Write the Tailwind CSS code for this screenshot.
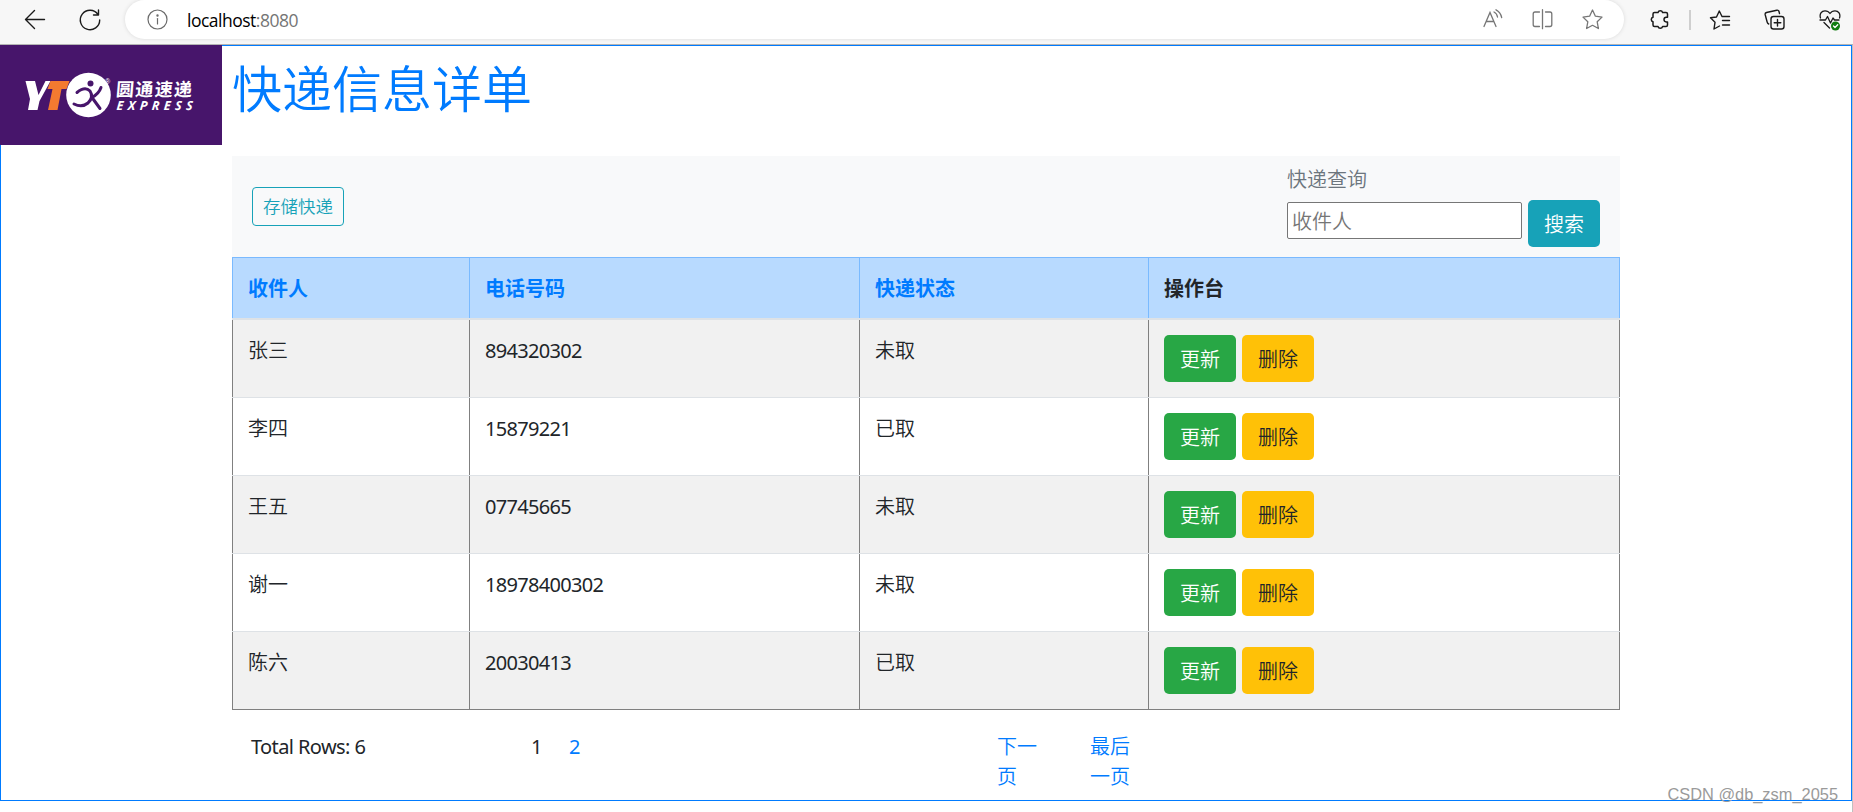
<!DOCTYPE html>
<html lang="zh-CN">
<head>
<meta charset="utf-8">
<title>快递信息详单</title>
<script src="https://cdn.jsdelivr.net/npm/@tailwindcss/browser@4"></script>
</head>
<body class="w-[1853px] h-[812px] overflow-hidden bg-white font-['Noto_Sans','Noto_Sans_CJK_SC',sans-serif] text-[20px] leading-[30px] text-[#212529]">
<div class="relative flex h-full flex-col">
  <!-- browser toolbar -->
  <header class="flex h-[45px] shrink-0 items-start border-b border-[#b4b4b4] bg-[#f7f7f7]">
    <div class="flex h-[39px] w-[125px] shrink-0 items-center gap-[31px] pl-[24px]">
      <svg class="size-[23px]" viewBox="0 0 23 23" fill="none" stroke="#1b1b1b" stroke-width="1.4" stroke-linecap="round" stroke-linejoin="round"><path d="M20.5 11.5H1.5M10.5 2.5l-9 9 9 9"/></svg>
      <svg class="size-[24px]" viewBox="0 0 24 24" fill="none" stroke="#1b1b1b" stroke-width="1.4" stroke-linecap="round" stroke-linejoin="round"><path d="M20 6.500A9.700 9.700 0 1 0 21.700 12M20.500 2v5h-5"/></svg>
    </div>
    <div class="flex h-[39px] w-[1499px] shrink-0 items-center rounded-full bg-white pl-[22px] shadow-[0_0_4px_rgba(0,0,0,0.12)]">
      <svg class="size-[21px] shrink-0" viewBox="0 0 21 21" fill="none" stroke="#6b6b6b" stroke-width="1.200" stroke-linecap="round"><circle cx="10.500" cy="10.500" r="9.500"/><path d="M10.500 9.500v5.500"/><circle cx="10.500" cy="6.500" r=".6" fill="#6b6b6b"/></svg>
      <div class="ml-[19px] flex-1 font-['Open_Sans'] text-[17.5px] tracking-[-0.500px] text-black">localhost<span class="text-[#757575]">:8080</span></div>
      <div class="mr-[21px] flex items-center gap-[29px]">
        <svg class="size-[21px]" viewBox="0 0 21 21" fill="none" stroke="#767676" stroke-width="1.300" stroke-linecap="round"><path d="M2 17.500 8 3.500l6 14M4.200 12.500h7.600M12 3q3 1.500 3.500 5M14 .8q4.500 2.200 5.700 7.700"/></svg>
        <svg class="size-[21px]" viewBox="0 0 21 21" fill="none" stroke="#767676" stroke-width="1.300" stroke-linecap="round"><path d="M10.500.7v19M7.500 3H3Q1.200 3 1.200 5v10.500q0 2 1.800 2h4.500M13.500 3H18q1.800 0 1.800 2v10.500q0 2-1.800 2h-4.500"/></svg>
        <svg class="size-[21px]" viewBox="0 0 21 21" fill="none" stroke="#767676" stroke-width="1.300" stroke-linejoin="round"><path d="m10.500 1 2.900 6.200 6.600.9-4.800 4.700 1.200 6.700-5.900-3.200-5.900 3.200 1.200-6.700L1 8.100l6.600-.9z"/></svg>
      </div>
    </div>
    <div class="flex h-[39px] items-center pl-[25px]">
      <svg class="size-[21px]" viewBox="0 0 21 21" fill="none" stroke="#1b1b1b" stroke-width="1.500" stroke-linejoin="round"><path d="M5.500 3.500H9a2.400 2.400 0 0 1 4.600 0H17q1.500 0 1.500 1.500v3.300h-1.200a2.300 2.300 0 0 0 0 4.600h1.200V16q0 1.500-1.500 1.500h-3.400a2.400 2.400 0 0 1-4.600 0H5.500Q4 17.500 4 16v-3.200a2.400 2.400 0 0 1 0-4.600V5q0-1.500 1.500-1.500z"/></svg>
      <div class="ml-[19px] h-[20px] w-[2px] bg-[#cfcfcf]"></div>
      <svg class="ml-[18px] h-[20px] w-[22px]" viewBox="0 0 22 20" fill="none" stroke="#1b1b1b" stroke-width="1.400" stroke-linecap="round" stroke-linejoin="round"><path d="M13 6.500 10.300 1 7.500 7l-6 .800 4.500 4.500L5 19l5.500-3M13 6.500h7.500M13.500 10.500h7M13.500 15h7"/></svg>
      <svg class="ml-[33px] size-[21px]" viewBox="0 0 21 21" fill="none" stroke="#1b1b1b" stroke-width="1.400" stroke-linecap="round" stroke-linejoin="round"><rect x="7" y="7.500" width="13" height="12.500" rx="2.500"/><path d="M13.500 10.500v6.500M10.200 13.700h6.600M15.500 4.500 15 2.500q-.5-1.700-2.200-1.300L2.500 3.500Q.8 4 1.200 5.700l2 7.500q.3 1.300 1.500 1.800"/></svg>
      <svg class="ml-[34px] size-[22px]" viewBox="0 0 22 22" fill="none" stroke="#1b1b1b" stroke-width="1.300" stroke-linecap="round" stroke-linejoin="round"><path d="M1.500 9C.2 5 2.500 1.800 6 1.800c2.300 0 4 1.200 5 2.700 1-1.500 2.700-2.700 5-2.700 3.500 0 5.800 3.200 4.500 7.200M1 11h5.500l2-3.500 3 6.500 2.500-5 1.500 2H20M5 13.500l5.500 5.500"/><circle cx="16.500" cy="17" r="4.500" fill="#107c10" stroke="none"/><path d="m14.500 17 1.500 1.500 2.700-2.700" stroke="#fff"/></svg>
    </div>
  </header>

  <!-- page viewport -->
  <div class="flex h-[767px] shrink-0 border-r border-[#c0c0c0]">
   <main class="h-[756px] w-[1852px] shrink-0 border border-[#007bff]">
    <div class="-ml-px -mt-px flex h-[755px]">
      <div class="h-[100px] w-[222px] shrink-0 bg-[#47156b]">
        <svg class="h-[100px] w-[222px]" viewBox="0 0 222 100">
          <path fill="#fff" d="M25.500 36h9.500l3.500 14 7-14h5L39.500 56l-2 9H28l2-11z"/>
          <path fill="#f37a30" d="M50.500 36h19l-3 8h-5l-4 21h-9.500l4.500-21h-5z"/>
          <circle cx="88.500" cy="50" r="22.300" fill="#fff"/>
          <circle cx="90.500" cy="38.500" r="3" fill="#47156b"/>
          <path fill="none" stroke="#47156b" stroke-width="3" stroke-linecap="round" stroke-linejoin="round" d="M77 47.500q8-6.500 13-1.500 4 6-2 12-6 5-14 1M101 42.500q-2 6-9 10l8 11"/>
          <text x="105" y="39" fill="#fff" font-family="Liberation Sans" font-size="7">®</text>
          <g transform="translate(116 0) skewX(-5)">
            <text x="4" y="51" fill="#fff" font-family="Noto Sans CJK SC" font-weight="700" font-size="18" textLength="76">圆通速递</text>
            <text x="6" y="65" fill="#fff" font-family="Open Sans" font-weight="700" font-style="italic" font-size="12.500" textLength="76">EXPRESS</text>
          </g>
        </svg>
      </div>
      <section class="ml-[10px] w-[1388px]">
        <h1 class="flex h-[111px] items-start pt-[14px] text-[50px] leading-[60px] font-[350] text-[#007bff]">快递信息详单</h1>
        <div class="flex h-[101px] items-center justify-between bg-[#f8f9fa] px-[20px]">
          <button class="flex h-[39px] w-[92px] items-center justify-center rounded-[4px] border border-[#17a2b8] pb-px text-[17.500px] font-[350] text-[#17a2b8]">存储快递</button>
          <form class="flex h-full flex-col pt-[9px]">
            <label class="font-[350] text-[#6c757d]">快递查询</label>
            <div class="flex items-start gap-[6px] pt-[5px]">
              <input class="mt-[2px] h-[37px] w-[235px] rounded-[2px] border border-[#767676] bg-white px-[4px] pt-[2px] font-[350] placeholder:text-[#757575]" placeholder="收件人">
              <button type="button" class="h-[47px] w-[72px] rounded-[5px] bg-[#17a2b8] pt-[3px] font-[350] text-white">搜索</button>
            </div>
          </form>
        </div>
        <div>
          <div class="grid h-[63px] grid-cols-[237px_390px_289px_472px] border-t border-b-2 border-t-[#7abaff] border-b-[#dee2e6] bg-[#b8daff] font-bold text-[#007bff] *:border-l *:border-[#7abaff] *:pt-[16px] *:pl-[15px]">
            <div>收件人</div><div>电话号码</div><div>快递状态</div><div class="border-r text-[#212529]">操作台</div>
          </div>
          <div id="rows"></div>
        </div>
        <nav class="flex pt-[22px] font-[350]">
          <div class="w-[299px] pl-[19px] font-normal tracking-[-0.600px]">Total Rows: 6</div>
          <div class="w-[38px] font-normal">1</div>
          <a class="w-[428px] font-normal text-[#007bff]">2</a>
          <a class="w-[93px] pr-[50px] text-[#007bff]">下一页</a>
          <a class="w-[42px] text-[#007bff]">最后一页</a>
        </nav>
      </section>
    </div>
   </main>
  </div>
  <div class="absolute right-[15px] bottom-[6px] font-['Liberation_Sans'] text-[16.400px] leading-[24px] text-[#9a9a9a]">CSDN @db_zsm_2055</div>
</div>
<template id="row">
  <div class="grid h-[78px] grid-cols-[237px_390px_289px_472px] border-b border-[#dee2e6] odd:bg-[#f1f1f1] last:border-[#808080] *:border-l *:border-[#808080] *:pt-[16px] *:pl-[15px]">
    <div class="font-[350]"></div>
    <div class="tracking-[-0.680px]"></div>
    <div class="font-[350]"></div>
    <div class="flex gap-[6px] border-r font-[350]">
      <button class="-mt-px h-[47px] w-[72px] rounded-[5px] bg-[#28a745] pt-[3px] text-white">更新</button>
      <button class="-mt-px h-[47px] w-[72px] rounded-[5px] bg-[#ffc107] pt-[3px]">删除</button>
    </div>
  </div>
</template>
<script>
const data = [["张三","894320302","未取"],["李四","15879221","已取"],["王五","07745665","未取"],["谢一","18978400302","未取"],["陈六","20030413","已取"]];
const rows = document.getElementById("rows");
for (const r of data) {
  const n = document.getElementById("row").content.firstElementChild.cloneNode(true);
  r.forEach((t, i) => n.children[i].textContent = t);
  rows.append(n);
}
</script>
</body>
</html>
